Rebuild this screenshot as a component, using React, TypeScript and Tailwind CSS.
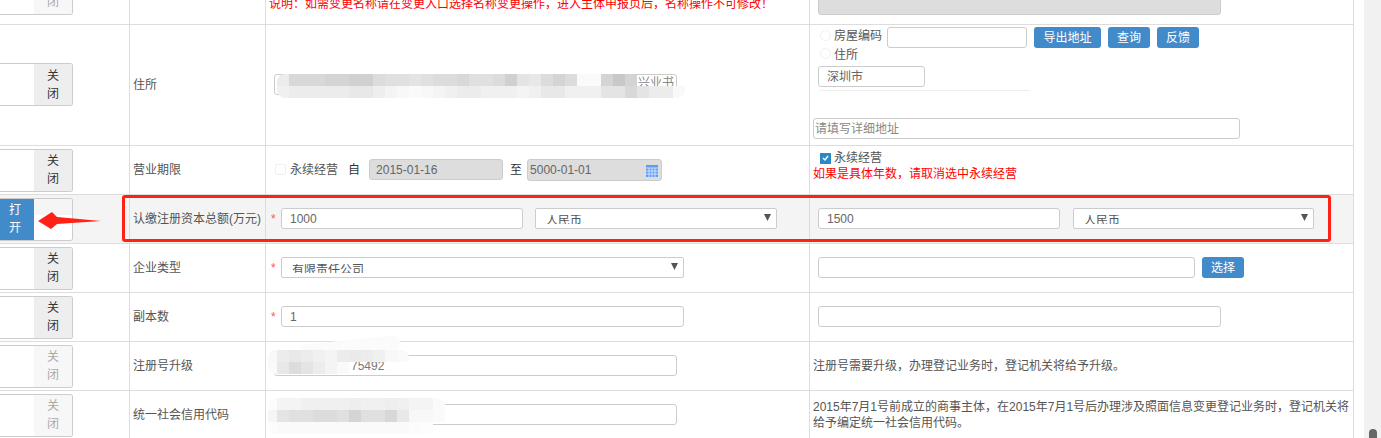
const font = { fontFamily: '"Liberation Sans", "Noto Sans CJK SC", sans-serif' }

function Toggle({ on, disabled }: { on?: boolean; disabled?: boolean }) {
  return (
    <div className="flex h-[43px] w-[73px] shrink-0 overflow-hidden rounded-r-[3px] border border-l-0 border-[#ccc] bg-white">
      {on ? (
        <>
          <div className="flex w-[34px] items-center justify-center bg-[#428bca] pr-[4px] text-center leading-[18px] text-white">打<br />开</div>
          <div className="flex flex-1 flex-col">
            <div className="h-[16px] bg-[#f5f5f5]" />
            <div className="flex-1 bg-white" />
          </div>
        </>
      ) : (
        <>
          <div className="w-[34px]" />
          <div className={`flex flex-1 items-center justify-center text-center leading-[18px] ${disabled ? 'bg-[#f7f7f7] text-[#aaa]' : 'bg-[#eee] text-[#333]'}`}>关<br />闭</div>
        </>
      )}
    </div>
  )
}

function Input({ className = '', pad = 'px-[8px]', children, disabled }: {
  className?: string
  pad?: string
  children?: React.ReactNode
  disabled?: boolean
}) {
  return (
    <div className={`flex h-[21px] shrink-0 items-center rounded-[3px] border border-[#ccc] text-[#666] ${pad} ${disabled ? 'bg-[#ddd]' : 'bg-white'} ${className}`}>
      {children}
    </div>
  )
}

// select whose label is cut off at the bottom, as in the old browser rendering
function Select({ label, className = '' }: { label: string; className?: string }) {
  return (
    <div className={`flex h-[21px] shrink-0 items-start justify-between rounded-[2px] border border-[#ccc] bg-white pr-[5px] pl-[10px] text-[#555] ${className}`}>
      <div className="mt-[6px] h-[9px] overflow-hidden leading-[12px]">{label}</div>
      <svg width="7" height="7" viewBox="0 0 7 7" className="mt-[5px]"><path d="M0 0H7L3.5 7Z" fill="#555" /></svg>
    </div>
  )
}

function Btn({ children, className = '' }: { children: React.ReactNode; className?: string }) {
  return <div className={`flex h-[21px] shrink-0 items-center justify-center rounded-[3px] bg-[#428bca] text-white ${className}`}>{children}</div>
}

function Radio() {
  return <div className="h-[11px] w-[11px] rounded-full border border-[#f0f0f0] bg-white" />
}

function Required() {
  return <span className="w-[10px] shrink-0 text-[#f55]">*</span>
}

function Row({ toggle, label, middle, right, className = '' }: {
  toggle: React.ReactNode
  label: string
  middle: React.ReactNode
  right: React.ReactNode
  className?: string
}) {
  return (
    <div className={`grid grid-cols-[130px_136px_544px_1fr] grid-rows-[minmax(0,1fr)] overflow-hidden border-b border-[#ddd] ${className}`}>
      <div className="flex items-center border-r border-[#ddd]">{toggle}</div>
      <div className="flex items-center border-r border-[#ddd] pl-[3px] text-[#555]">{label}</div>
      <div className="flex items-center border-r border-[#ddd] pb-[1px] pl-[5px]">{middle}</div>
      <div className="flex items-center pb-[1px]">{right}</div>
    </div>
  )
}

function Mosaic({ className, rows, inner = '' }: { className: string; rows: number[][]; inner?: string }) {
  return (
    <div className={`absolute overflow-hidden rounded-[8px] ${className}`}>
      {rows.map((row, r) => (
        <div key={r} className={`flex h-[12px] ${inner}`}>
          {row.map((v, c) => (
            <div key={c} className="h-[12px] w-[12px] shrink-0" style={{ background: v === 255 ? 'transparent' : `rgb(${v},${v},${v})` }} />
          ))}
        </div>
      ))}
    </div>
  )
}

export default function App() {
  return (
    <div className="relative flex h-[438px] w-[1381px] overflow-hidden bg-white text-[12px] leading-[16px]" style={font}>
      <div className="w-[1354px] shrink-0 border-r border-[#ddd]">
        <Row
          className="h-[25px]"
          toggle={
            <div className="mb-[9px] flex h-[43px] w-[73px] self-end overflow-hidden rounded-r-[3px] border border-l-0 border-[#ccc]">
              <div className="w-[34px]" />
              <div className="flex flex-1 items-end justify-center bg-[#f7f7f7] pb-[4px] text-[#aaa]">闭</div>
            </div>
          }
          label=""
          middle={<div className="-ml-[2px] -mt-[4px] self-start text-[#f00]">说明：如需变更名称请在变更入口选择名称变更操作，进入主体申报页后，名称操作不可修改！</div>}
          right={<div className="-mt-[15px] ml-[8px] h-[30px] w-[403px] self-start rounded-[3px] border border-[#ccc] bg-[#ddd]" />}
        />
        <Row
          className="h-[121px]"
          toggle={<div className="-mt-[1px]"><Toggle /></div>}
          label="住所"
          middle={<Input className="ml-[3px] w-[403px] justify-end" pad="pl-[8px] pr-[2px]"><span className="-mt-[3px] text-[#888]">兴业书</span></Input>}
          right={
            <div className="flex h-full w-full flex-col pl-[3px]">
              <div className="flex items-start pt-[2px] pl-[7px]">
                <div className="mt-[3px] mr-[3px]"><Radio /></div>
                <span className="mt-[1px] w-[53px] text-[#555]">房屋编码</span>
                <Input className="w-[140px]" />
                <Btn className="ml-[7px] w-[67px]">导出地址</Btn>
                <Btn className="ml-[7px] w-[42px]">查询</Btn>
                <Btn className="ml-[7px] w-[42px]">反馈</Btn>
              </div>
              <div className="flex items-start pl-[7px] text-[#555]">
                <div className="mr-[3px]"><Radio /></div>
                <span className="-mt-[1px]">住所</span>
              </div>
              <Input className="mt-[3px] ml-[5px] w-[107px]">深圳市</Input>
              <div className="mt-[3px] ml-[5px] h-[4px] w-[213px] rounded-t-[3px] border-t border-[#eee]" />
              <Input className="mt-[24px] w-[427px] text-[#888]" pad="px-[1px]">请填写详细地址</Input>
            </div>
          }
        />
        <Row
          className="h-[49px]"
          toggle={<Toggle />}
          label="营业期限"
          middle={
            <div className="flex items-center pl-[4px] text-[#555]">
              <div className="h-[11px] w-[11px] rounded-[2px] border border-[#f0f0f0]" />
              <span className="ml-[4px]">永续经营</span>
              <span className="ml-[10px] text-[#333]">自</span>
              <Input disabled className="ml-[9px] w-[134px]" pad="px-[6px]">2015-01-16</Input>
              <span className="ml-[7px] text-[#333]">至</span>
              <Input disabled className="ml-[5px] h-[22px] w-[135px] justify-between" pad="pl-[2px] pr-[3px]">
                5000-01-01
                <svg width="12" height="12" viewBox="0 0 12 12" className="mt-[2px]">
                  <rect width="12" height="12" fill="#5c9cf5" />
                  <path d="M0 3H12M0 6H12M0 9H12M3 3V12M6 3V12M9 3V12" stroke="#cfe0fb" strokeWidth="1" />
                </svg>
              </Input>
            </div>
          }
          right={
            <div className="flex h-full flex-col pl-[3px]">
              <div className="flex items-center pt-[4px] pl-[7px] text-[#555]">
                <div className="flex h-[11px] w-[11px] items-center justify-center bg-[#2a8ac8]">
                  <svg width="7" height="6" viewBox="0 0 7 6"><path d="M1 3L3 5L6 1" stroke="#fff" strokeWidth="1.4" fill="none" /></svg>
                </div>
                <span className="ml-[3px]">永续经营</span>
              </div>
              <div className="text-[#f00]">如果是具体年数，请取消选中永续经营</div>
            </div>
          }
        />
        <Row
          className="h-[49px] bg-[#f4f4f4]"
          toggle={<Toggle on />}
          label="认缴注册资本总额(万元)"
          middle={
            <div className="flex items-center">
              <Required />
              <Input className="w-[242px]">1000</Input>
              <Select label="人民币" className="ml-[12px] w-[242px]" />
            </div>
          }
          right={
            <div className="flex items-center pl-[8px]">
              <Input className="w-[242px]">1500</Input>
              <Select label="人民币" className="ml-[13px] w-[241px]" />
            </div>
          }
        />
        <Row
          className="h-[49px]"
          toggle={<Toggle />}
          label="企业类型"
          middle={<div className="flex items-center"><Required /><Select label="有限责任公司" className="w-[403px]" /></div>}
          right={
            <div className="flex items-center pl-[8px]">
              <Input className="w-[377px]" />
              <Btn className="ml-[7px] w-[42px]">选择</Btn>
            </div>
          }
        />
        <Row
          className="h-[49px]"
          toggle={<Toggle />}
          label="副本数"
          middle={<div className="flex items-center"><Required /><Input className="w-[403px]">1</Input></div>}
          right={<Input className="ml-[8px] w-[403px]" />}
        />
        <Row
          className="h-[49px]"
          toggle={<Toggle disabled />}
          label="注册号升级"
          middle={<Input className="ml-[3px] w-[403px] text-[#777]"><span className="ml-[68px]">75492</span></Input>}
          right={<div className="pl-[3px] text-[#555]">注册号需要升级，办理登记业务时，登记机关将给予升级。</div>}
        />
        <Row
          className="h-[49px]"
          toggle={<Toggle disabled />}
          label="统一社会信用代码"
          middle={<Input className="ml-[3px] w-[403px]" />}
          right={<div className="pl-[3px] text-[#555]">2015年7月1号前成立的商事主体，在2015年7月1号后办理涉及照面信息变更登记业务时，登记机关将给予编定统一社会信用代码。</div>}
        />
      </div>

      <div className="ml-auto flex w-[17px] items-end justify-center bg-[#f1f1f1]">
        <div className="h-[9px] w-[8px] rounded-t-[4px] bg-[#666]" />
      </div>

      {/* pixelated patches hiding the address and the numbers */}
      <Mosaic className="left-[277px] top-[74px]" rows={[
        [236, 216, 216, 216, 212, 212, 208, 208, 220, 224, 224, 228, 224, 220, 220, 216, 224, 224, 220, 208, 228, 232, 220, 212, 220, 250, 250, 212, 200, 212, 255, 255, 255, 255],
        [240, 236, 236, 236, 236, 236, 232, 232, 238, 244, 248, 250, 248, 244, 240, 236, 236, 240, 240, 240, 244, 240, 232, 232, 240, 240, 240, 228, 228, 216, 228, 236, 236, 249],
      ]} />
      <div className="absolute left-[300px] top-[340px] h-[14px] w-[100px] -rotate-[6deg] rounded-full bg-[#fbfbfb]" />
      <Mosaic className="left-[268px] top-[350px]" inner="-ml-[3px]" rows={[
        [248, 236, 232, 236, 240, 244, 236, 234, 236, 240, 248, 250],
        [250, 232, 220, 228, 236, 244, 250, 255, 255, 255, 255, 255],
      ]} />
      <Mosaic className="left-[268px] top-[398px]" inner="-ml-[3px]" rows={[
        [252, 244, 244, 240, 240, 240, 240, 238, 240, 240, 238, 240, 244, 244, 250],
        [245, 228, 224, 224, 220, 220, 224, 212, 224, 224, 216, 232, 248, 248, 250],
        [252, 250, 250, 250, 250, 250, 250, 250, 250, 250, 250, 250, 252, 253],
      ]} />

      {/* annotation drawn on top of the screenshot */}
      <div className="absolute left-[122px] top-[195px] h-[47px] w-[1209px] rounded-[3px] border-[3px] border-[#ff2016]" />
      <svg className="absolute left-[36px] top-[208px]" width="68" height="24" viewBox="0 0 68 24">
        <path d="M2 13L16 4L21 9L65 13L21 16L15 21Z" fill="#ff2016" />
      </svg>
    </div>
  )
}
